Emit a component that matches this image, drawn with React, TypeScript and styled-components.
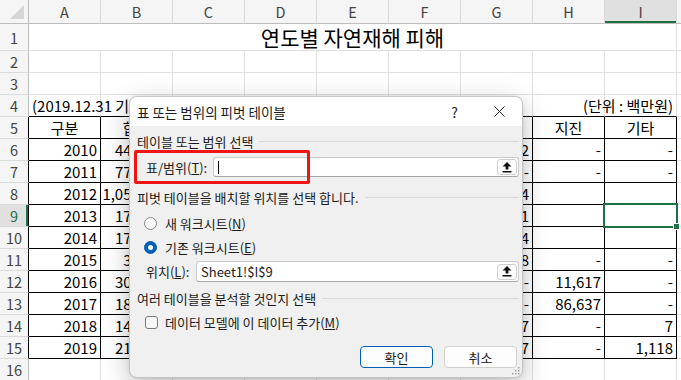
import React from "react";
import styled, { createGlobalStyle } from "styled-components";

const FONT = `"Noto Sans CJK KR", "Noto Sans", sans-serif`;
const GREEN = "#1e7145";

const GlobalStyle = createGlobalStyle`
  html, body { margin: 0; padding: 0; background: #fff; }
  body { width: 681px; height: 380px; overflow: hidden; }
`;

const Sheet = styled.div`
  position: relative;
  width: 681px;
  height: 380px;
  overflow: hidden;
  display: grid;
  grid-template-columns: 29px repeat(9, 72px) 1fr;
  grid-template-rows: 24px 27px repeat(15, 22px);
  background: #fff;
  font-family: ${FONT};
  font-size: 15px;
  color: #000;
`;

const Corner = styled.div`
  position: relative;
  background: #f5f5f5;
  border-right: 1px solid #bdbdbd;
  border-bottom: 1px solid #bdbdbd;
  &::after {
    content: "";
    position: absolute;
    right: 4px;
    bottom: 4px;
    border-left: 14px solid transparent;
    border-bottom: 14px solid #d6d6d6;
  }
`;

const ColHead = styled.div<{ $active?: boolean }>`
  display: flex;
  align-items: center;
  justify-content: center;
  background: ${(p) => (p.$active ? "#e0e0e0" : "#f5f5f5")};
  border-right: 1px solid #dadada;
  border-bottom: 1px solid #bdbdbd;
  box-shadow: ${(p) => (p.$active ? `inset 0 -2px 0 ${GREEN}` : "none")};
  color: #444;
  font-size: 14.5px;
`;

const RowHead = styled.div<{ $active?: boolean; $edge?: boolean }>`
  display: flex;
  align-items: center;
  justify-content: center;
  background: ${(p) => (p.$active ? "#e0e0e0" : "#f5f5f5")};
  border-right: 1px solid ${(p) => (p.$edge ? "#000" : "#bdbdbd")};
  border-bottom: 1px solid #dadada;
  box-shadow: ${(p) => (p.$active ? `inset -2px 0 0 ${GREEN}` : "none")};
  color: ${(p) => (p.$active ? GREEN : "#444")};
  font-size: 14.5px;
`;

type Align = "left" | "right" | "center";

const Cell = styled.div<{ $align?: Align; $boxed?: boolean; $rule?: boolean; $selected?: boolean }>`
  position: relative;
  display: flex;
  align-items: center;
  justify-content: ${(p) =>
    p.$align === "right" ? "flex-end" : p.$align === "center" ? "center" : "flex-start"};
  padding: 0 3px;
  white-space: nowrap;
  border-right: 1px solid ${(p) => (p.$boxed ? "#000" : "#e1e1e1")};
  border-bottom: 1px solid ${(p) => (p.$boxed || p.$rule ? "#000" : "#e1e1e1")};
  z-index: ${(p) => (p.$selected ? 2 : "auto")};
  &::before {
    content: "";
    display: ${(p) => (p.$selected ? "block" : "none")};
    position: absolute;
    left: -2px;
    top: -2px;
    right: -2px;
    bottom: -2px;
    border: 2px solid ${GREEN};
  }
  &::after {
    content: "";
    display: ${(p) => (p.$selected ? "block" : "none")};
    position: absolute;
    right: -4px;
    bottom: -4px;
    width: 5px;
    height: 5px;
    background: ${GREEN};
    border: 1px solid #fff;
  }
`;

const TitleCell = styled(Cell)`
  grid-column: 2 / span 9;
  justify-content: center;
  font-size: 21px;
`;

/* ---------- dialog ---------- */

const Dialog = styled.div`
  position: absolute;
  left: 129px;
  top: 96px;
  width: 394px;
  height: 282px;
  box-sizing: border-box;
  border: 1px solid #c6c6c6;
  border-radius: 8px;
  background: #f0f0f0;
  box-shadow: 0 8px 26px rgba(0, 0, 0, 0.26), 0 0 3px rgba(0, 0, 0, 0.12);
  overflow: hidden;
  display: flex;
  flex-direction: column;
  font-family: ${FONT};
  font-size: 13px;
  color: #1b1b1b;
  z-index: 5;
`;

const TitleBar = styled.div`
  height: 29px;
  flex: none;
  background: #fff;
  display: flex;
  align-items: center;
  padding-left: 7px;
`;

const TitleText = styled.span`
  font-size: 13.5px;
`;

const Controls = styled.div`
  margin-left: auto;
  display: flex;
  height: 100%;
`;

const CtrlButton = styled.div`
  width: 45px;
  height: 100%;
  display: flex;
  align-items: center;
  justify-content: center;
  font-size: 14px;
  color: #222;
`;

const Body = styled.div`
  display: flex;
  flex-direction: column;
  padding: 0 3px 0 7px;
`;

const Section = styled.div<{ $mt: number }>`
  display: flex;
  align-items: center;
  gap: 6px;
  height: 18px;
  margin-top: ${(p) => p.$mt}px;
  &::after {
    content: "";
    flex: 1;
    height: 1px;
    background: #d9d9d9;
  }
`;

const FieldRow = styled.div<{ $mt: number; $h: number; $pl: number }>`
  position: relative;
  display: flex;
  align-items: center;
  height: ${(p) => p.$h}px;
  margin-top: ${(p) => p.$mt}px;
  padding-left: ${(p) => p.$pl}px;
`;

const FieldLabel = styled.span<{ $w: number }>`
  width: ${(p) => p.$w}px;
  flex: none;
`;

const TextBox = styled.div<{ $h: number }>`
  flex: 1;
  height: ${(p) => p.$h}px;
  box-sizing: border-box;
  background: #fff;
  border: 1px solid #cacaca;
  border-bottom-color: #a8a8a8;
  border-radius: 3px;
  display: flex;
  align-items: center;
  padding: 0 1px 0 4px;
  font-size: 13px;
`;

const Caret = styled.span`
  width: 1px;
  height: 13px;
  background: #000;
`;

const PickButton = styled.div`
  margin-left: auto;
  width: 20px;
  height: 16px;
  box-sizing: border-box;
  border: 1px solid #cfcfcf;
  border-radius: 3px;
  background: #fcfcfc;
  display: flex;
  align-items: center;
  justify-content: center;
`;

const RedMark = styled.div`
  position: absolute;
  left: -3px;
  top: 0;
  width: 176px;
  height: 34px;
  box-sizing: border-box;
  border: 3px solid #f01414;
  border-radius: 2px;
  pointer-events: none;
`;

const Radio = styled.span<{ $on?: boolean }>`
  width: 13px;
  height: 13px;
  box-sizing: border-box;
  border-radius: 50%;
  flex: none;
  margin-right: 8px;
  background: ${(p) => (p.$on ? "#005fb8" : "#f7f7f7")};
  border: 1px solid ${(p) => (p.$on ? "#005fb8" : "#8a8a8a")};
  display: flex;
  align-items: center;
  justify-content: center;
  &::after {
    content: "";
    display: ${(p) => (p.$on ? "block" : "none")};
    width: 5px;
    height: 5px;
    border-radius: 50%;
    background: #fff;
  }
`;

const Check = styled.span`
  width: 13px;
  height: 13px;
  box-sizing: border-box;
  border-radius: 3px;
  border: 1px solid #7a7a7a;
  background: #f7f7f7;
  flex: none;
  margin-right: 7px;
`;

const ButtonRow = styled.div`
  display: flex;
  justify-content: flex-end;
  gap: 11px;
  margin-top: 13px;
  padding-right: 2px;
`;

const Button = styled.div<{ $primary?: boolean }>`
  width: 73px;
  height: 22px;
  box-sizing: border-box;
  border-radius: 4px;
  background: #fdfdfd;
  border: 1px solid ${(p) => (p.$primary ? "#005fb8" : "#d0d0d0")};
  display: flex;
  align-items: center;
  justify-content: center;
  font-size: 13px;
`;

const Grip = styled.svg`
  position: absolute;
  right: 2px;
  bottom: 2px;
`;

const UpArrow = () => (
  <svg width="10" height="11" viewBox="0 0 10 11">
    <polygon points="5,0 9.5,4.6 6.4,4.6 6.4,7.6 3.6,7.6 3.6,4.6 0.5,4.6" fill="#111" />
    <rect x="0.5" y="9" width="9" height="1.5" fill="#111" />
  </svg>
);

const CloseIcon = () => (
  <svg width="11" height="11" viewBox="0 0 11 11">
    <path d="M0.5 0.5 L10.5 10.5 M10.5 0.5 L0.5 10.5" stroke="#222" strokeWidth="1" />
  </svg>
);

/* ---------- data ---------- */

const LETTERS = ["A", "B", "C", "D", "E", "F", "G", "H", "I"];
const HEADERS = ["구분", "합계", "", "", "", "", "", "지진", "기타"];
// columns C–F sit under the dialog, so they are left empty
const DATA: string[][] = [
  ["2010", "442,589", "", "", "", "", "462", "-", "-"],
  ["2011", "779,806", "", "", "", "", "-", "-", "-"],
  ["2012", "1,059,247", "", "", "", "", "4,774", "", ""],
  ["2013", "172,128", "", "", "", "", "331", "", ""],
  ["2014", "171,784", "", "", "", "", "224", "", ""],
  ["2015", "31,814", "", "", "", "", "458", "-", "-"],
  ["2016", "306,540", "", "", "", "", "-", "11,617", "-"],
  ["2017", "189,726", "", "", "", "", "-", "86,637", "-"],
  ["2018", "140,843", "", "", "", "", "217", "-", "7"],
  ["2019", "216,177", "", "", "", "", "7", "-", "1,118"],
];

export default function App() {
  const blank = (key: string) => <Cell key={key} />;

  return (
    <>
      <GlobalStyle />
      <Sheet>
        {/* column headers */}
        <Corner />
        {LETTERS.map((l) => (
          <ColHead key={l} $active={l === "I"}>{l}</ColHead>
        ))}
        <ColHead />

        {/* row 1 */}
        <RowHead>1</RowHead>
        <TitleCell>연도별 자연재해 피해</TitleCell>
        {blank("r1j")}

        {/* rows 2-3 */}
        {[2, 3].map((r) => (
          <React.Fragment key={r}>
            <RowHead>{r}</RowHead>
            {LETTERS.map((l) => blank(`r${r}${l}`))}
            {blank(`r${r}j`)}
          </React.Fragment>
        ))}

        {/* row 4 */}
        <RowHead>4</RowHead>
        <Cell $rule>(2019.12.31 기준)</Cell>
        {LETTERS.slice(1, 8).map((l) => <Cell key={`r4${l}`} $rule />)}
        <Cell $rule $align="right">(단위 : 백만원)</Cell>
        {blank("r4j")}

        {/* row 5 */}
        <RowHead $edge>5</RowHead>
        {HEADERS.map((h, c) => (
          <Cell key={c} $boxed $align="center">{h}</Cell>
        ))}
        {blank("r5j")}

        {/* rows 6-15 */}
        {DATA.map((row, i) => {
          const r = i + 6;
          return (
            <React.Fragment key={r}>
              <RowHead $edge $active={r === 9}>{r}</RowHead>
              {row.map((v, c) => (
                <Cell key={c} $boxed $align="right" $selected={r === 9 && c === 8}>{v}</Cell>
              ))}
              {blank(`r${r}j`)}
            </React.Fragment>
          );
        })}

        {/* row 16 */}
        <RowHead>16</RowHead>
        {LETTERS.map((l) => blank(`r16${l}`))}
        {blank("r16j")}

        <Dialog>
          <TitleBar>
            <TitleText>표 또는 범위의 피벗 테이블</TitleText>
            <Controls>
              <CtrlButton>?</CtrlButton>
              <CtrlButton><CloseIcon /></CtrlButton>
            </Controls>
          </TitleBar>
          <Body>
            <Section $mt={6}>테이블 또는 범위 선택</Section>
            <FieldRow $mt={0} $h={34} $pl={9}>
              <RedMark />
              <FieldLabel $w={67}>표/범위(<u>T</u>):</FieldLabel>
              <TextBox $h={20}>
                <Caret />
                <PickButton><UpArrow /></PickButton>
              </TextBox>
            </FieldRow>
            <Section $mt={4}>피벗 테이블을 배치할 위치를 선택 합니다.</Section>
            <FieldRow $mt={7} $h={20} $pl={7}>
              <Radio />새 워크시트(<u>N</u>)
            </FieldRow>
            <FieldRow $mt={4} $h={20} $pl={7}>
              <Radio $on />기존 워크시트(<u>E</u>)
            </FieldRow>
            <FieldRow $mt={4} $h={21} $pl={9}>
              <FieldLabel $w={50}>위치(<u>L</u>):</FieldLabel>
              <TextBox $h={21}>
                Sheet1!$I$9
                <PickButton><UpArrow /></PickButton>
              </TextBox>
            </FieldRow>
            <Section $mt={7}>여러 테이블을 분석할 것인지 선택</Section>
            <FieldRow $mt={5} $h={21} $pl={8}>
              <Check />데이터 모델에 이 데이터 추가(<u>M</u>)
            </FieldRow>
            <ButtonRow>
              <Button $primary>확인</Button>
              <Button>취소</Button>
            </ButtonRow>
          </Body>
          <Grip width="8" height="8" viewBox="0 0 8 8">
            <rect x="6" y="0" width="1.4" height="1.4" fill="#9a9a9a" />
            <rect x="3" y="3" width="1.4" height="1.4" fill="#9a9a9a" />
            <rect x="6" y="3" width="1.4" height="1.4" fill="#9a9a9a" />
            <rect x="0" y="6" width="1.4" height="1.4" fill="#9a9a9a" />
            <rect x="3" y="6" width="1.4" height="1.4" fill="#9a9a9a" />
            <rect x="6" y="6" width="1.4" height="1.4" fill="#9a9a9a" />
          </Grip>
        </Dialog>
      </Sheet>
    </>
  );
}
